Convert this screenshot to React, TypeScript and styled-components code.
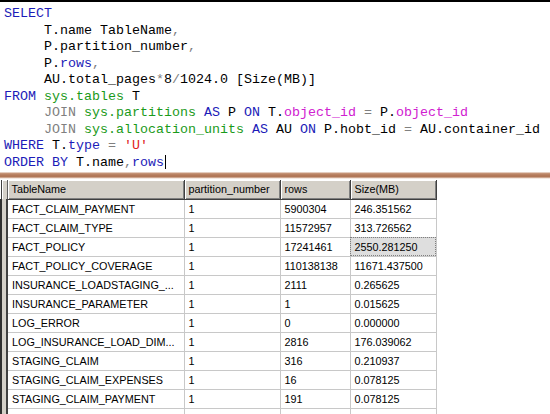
import React from "react";
import styled, { createGlobalStyle, css } from "styled-components";

const GlobalStyle = createGlobalStyle`
  html, body {
    margin: 0;
    padding: 0;
    background: #ffffff;
  }
`;

const Page = styled.div`
  width: 550px;
  height: 414px;
  overflow: hidden;
  display: flex;
  flex-direction: column;
  background: #ffffff;
`;

const Editor = styled.div`
  height: 172px;
  border-top: 2px solid #000000;
  padding: 4px 0 0 4px;
  box-sizing: border-box;
  font-family: "Liberation Mono", "Courier New", monospace;
  font-size: 13.33px;
  line-height: 16.5px;
  color: #000000;
  white-space: pre;
  flex-shrink: 0;
`;

const CodeLine = styled.div<{ $indent?: number }>`
  padding-left: ${({ $indent }) => ($indent ?? 0) * 8}px;
  height: 16.5px;
`;

const Kw = styled.span`
  color: #1c1cb8;
`;
const Op = styled.span`
  color: #808080;
`;
const Sys = styled.span`
  color: #1a9a1a;
`;
const Fn = styled.span`
  color: #d020d0;
`;
const Str = styled.span`
  color: #e02020;
`;

const Caret = styled.span`
  display: inline-block;
  width: 1px;
  height: 14px;
  background: #000000;
  margin-left: 1px;
  vertical-align: -3px;
`;

const Splitter = styled.div`
  height: 7px;
  flex-shrink: 0;
  background: linear-gradient(
    to bottom,
    #ffffff 0px,
    #c99a7e 1px,
    #b47a5a 3px,
    #b07656 5px,
    #e8d2c4 6px,
    #ffffff 7px
  );
`;

const GridArea = styled.div`
  flex: 1;
  padding-top: 1px;
  overflow: hidden;
  font-family: "Liberation Sans", Arial, sans-serif;
  font-size: 10.8px;
  color: #000000;
`;

const Grid = styled.table`
  border-collapse: collapse;
  table-layout: fixed;
`;

const RowHead = styled.td<{ $header?: boolean }>`
  width: 4px;
  padding: 0;
  background: #d4d0c8;
  border-left: 2px solid #303030;
  border-right: 2px solid #404040;
  ${({ $header }) =>
    $header &&
    css`
      border-left: 1px solid #404040;
      border-right: 1px solid #606060;
      box-shadow: inset 1px 1px 0 #ffffff;
    `}
`;

const HeadCell = styled.th<{ $w: number }>`
  width: ${({ $w }) => $w}px;
  height: 19px;
  padding: 0 0 0 4px;
  box-sizing: border-box;
  text-align: left;
  font-weight: normal;
  background: #d4d0c8;
  border-right: 1px solid #404040;
  border-bottom: 1px solid #404040;
  box-shadow: inset 1px 1px 0 #ffffff, inset -1px -1px 0 #808080;
  white-space: nowrap;
  overflow: hidden;
`;

const Cell = styled.td<{ $selected?: boolean }>`
  height: 19px;
  padding: 0 0 0 4px;
  box-sizing: border-box;
  border-right: 1px solid #c8c8c8;
  border-bottom: 1px solid #c8c8c8;
  white-space: nowrap;
  overflow: hidden;
  ${({ $selected }) =>
    $selected &&
    css`
      background: repeating-conic-gradient(#bdbdbd 0 25%, #ffffff 0 50%) 0 0 /
        2px 2px;
      outline: 1px dotted #808080;
      outline-offset: -1px;
    `}
`;

const columns = [
  { name: "TableName", width: 177 },
  { name: "partition_number", width: 96 },
  { name: "rows", width: 70 },
  { name: "Size(MB)", width: 86 },
];

const rows: [string, string, string, string][] = [
  ["FACT_CLAIM_PAYMENT", "1", "5900304", "246.351562"],
  ["FACT_CLAIM_TYPE", "1", "11572957", "313.726562"],
  ["FACT_POLICY", "1", "17241461", "2550.281250"],
  ["FACT_POLICY_COVERAGE", "1", "110138138", "11671.437500"],
  ["INSURANCE_LOADSTAGING_...", "1", "2111", "0.265625"],
  ["INSURANCE_PARAMETER", "1", "1", "0.015625"],
  ["LOG_ERROR", "1", "0", "0.000000"],
  ["LOG_INSURANCE_LOAD_DIM...", "1", "2816", "176.039062"],
  ["STAGING_CLAIM", "1", "316", "0.210937"],
  ["STAGING_CLAIM_EXPENSES", "1", "16", "0.078125"],
  ["STAGING_CLAIM_PAYMENT", "1", "191", "0.078125"],
  ["", "", "", ""],
];

const App: React.FC = () => (
  <>
    <GlobalStyle />
    <Page>
      <Editor>
        <CodeLine>
          <Kw>SELECT</Kw>
        </CodeLine>
        <CodeLine $indent={5}>
          T.name TableName<Op>,</Op>
        </CodeLine>
        <CodeLine $indent={5}>
          P.partition_number<Op>,</Op>
        </CodeLine>
        <CodeLine $indent={5}>
          P.<Kw>rows</Kw>
          <Op>,</Op>
        </CodeLine>
        <CodeLine $indent={5}>
          AU.total_pages<Op>*</Op>8<Op>/</Op>1024.0 [Size(MB)]
        </CodeLine>
        <CodeLine>
          <Kw>FROM</Kw> <Sys>sys.tables</Sys> T
        </CodeLine>
        <CodeLine $indent={5}>
          <Op>JOIN</Op> <Sys>sys.partitions</Sys> <Kw>AS</Kw> P <Kw>ON</Kw> T.
          <Fn>object_id</Fn> <Op>=</Op> P.<Fn>object_id</Fn>
        </CodeLine>
        <CodeLine $indent={5}>
          <Op>JOIN</Op> <Sys>sys.allocation_units</Sys> <Kw>AS</Kw> AU{" "}
          <Kw>ON</Kw> P.hobt_id <Op>=</Op> AU.container_id
        </CodeLine>
        <CodeLine>
          <Kw>WHERE</Kw> T.<Kw>type</Kw> <Op>=</Op> <Str>'U'</Str>
        </CodeLine>
        <CodeLine>
          <Kw>ORDER</Kw> <Kw>BY</Kw> T.name<Op>,</Op>
          <Kw>rows</Kw>
          <Caret />
        </CodeLine>
      </Editor>
      <Splitter />
      <GridArea>
        <Grid>
          <thead>
            <tr>
              <RowHead as="th" $header />
              {columns.map((c) => (
                <HeadCell key={c.name} $w={c.width}>
                  {c.name}
                </HeadCell>
              ))}
            </tr>
          </thead>
          <tbody>
            {rows.map((r, i) => (
              <tr key={i}>
                <RowHead />
                {r.map((v, j) => (
                  <Cell key={j} $selected={i === 2 && j === 3}>
                    {v}
                  </Cell>
                ))}
              </tr>
            ))}
          </tbody>
        </Grid>
      </GridArea>
    </Page>
  </>
);

export default App;
